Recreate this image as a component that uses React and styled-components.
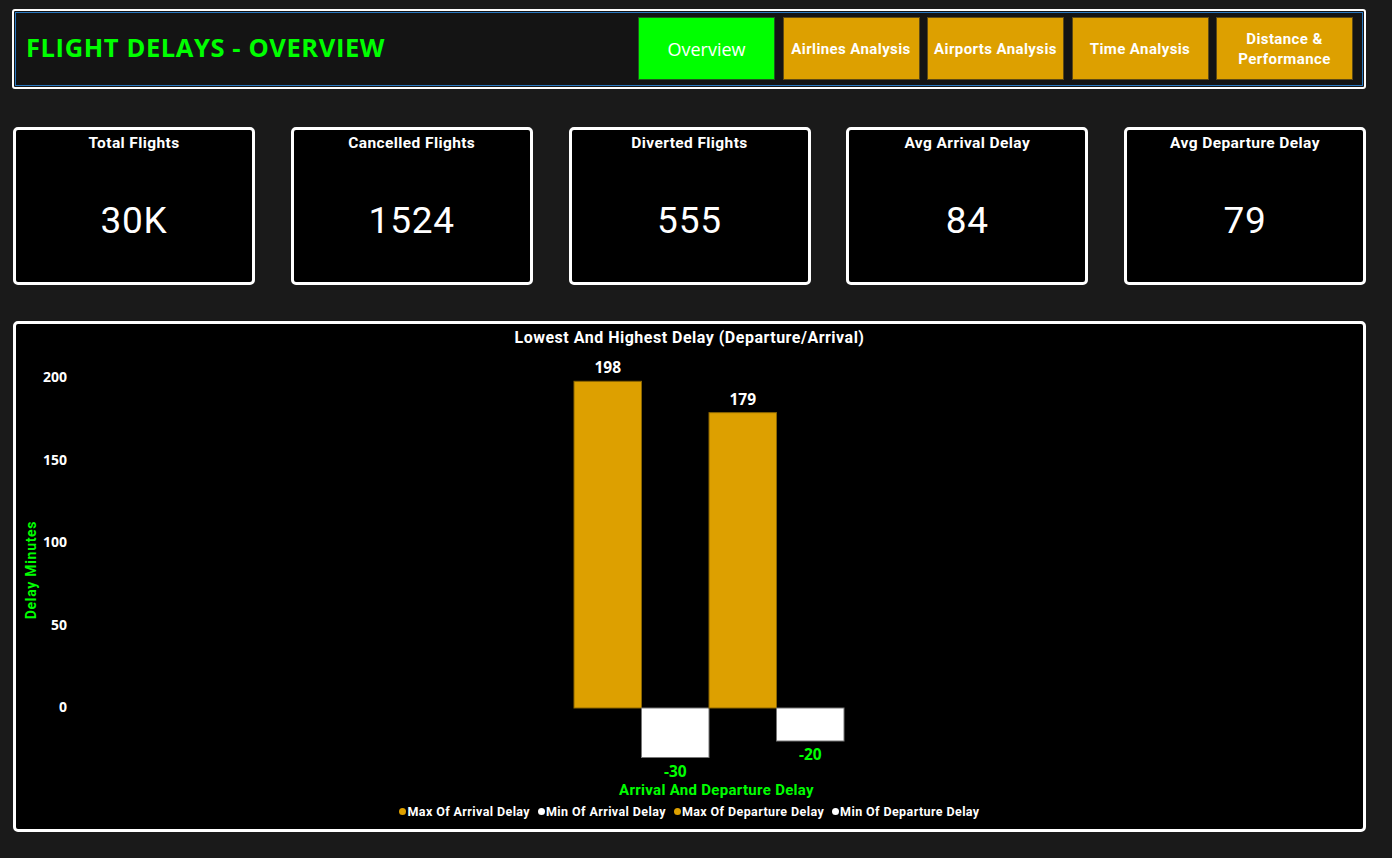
import React from 'react';
import styled, { createGlobalStyle } from 'styled-components';

const din = `Roboto, "Liberation Sans", sans-serif`;
const segoe = `"Open Sans", "Noto Sans", sans-serif`;

const GOLD = '#dda000';
const GREEN = '#00ff00';

const GlobalStyle = createGlobalStyle`
  html, body {
    margin: 0;
    padding: 0;
    background: #1a1a1a;
  }
  * { box-sizing: border-box; }
`;

const Page = styled.div`
  width: 1354px;
  margin-left: 12px;
  padding-top: 9px;
  display: flex;
  flex-direction: column;
`;

const Header = styled.header`
  height: 80px;
  border: 2px solid #fff;
  border-radius: 3px;
  padding: 1px;
  background: #141414;
`;

const HeaderInner = styled.div`
  height: 100%;
  border: 1px solid #2a78c0;
  display: flex;
  align-items: center;
  justify-content: space-between;
  padding: 0 9px 1px 10px;
`;

const Title = styled.h1`
  margin: 0 0 3px;
  font-family: ${segoe};
  font-weight: 700;
  font-size: 25.5px;
  color: ${GREEN};
  letter-spacing: 0.6px;
`;

const Tabs = styled.nav`
  display: flex;
  gap: 7.5px;
`;

const Tab = styled.div`
  width: 137px;
  height: 63px;
  display: flex;
  align-items: center;
  justify-content: center;
  text-align: center;
  color: #fff;
  line-height: 20px;
  background: ${p => (p.$active ? GREEN : GOLD)};
  border: 1px solid ${p => (p.$active ? '#1d5a1d' : '#5e4a14')};
  font-family: ${p => (p.$active ? segoe : din)};
  font-weight: ${p => (p.$active ? 400 : 700)};
  font-size: ${p => (p.$active ? '18px' : '15px')};
  letter-spacing: ${p => (p.$active ? '0' : '0.4px')};
`;

const KpiRow = styled.section`
  margin-top: 38px;
  display: flex;
  justify-content: space-between;
  padding-left: 1px;
`;

const Card = styled.div`
  width: 242px;
  height: 158px;
  background: #000;
  border: 3px solid #fff;
  border-radius: 5px;
  display: flex;
  flex-direction: column;
  align-items: center;
  color: #fff;
`;

const CardTitle = styled.div`
  font-family: ${din};
  font-weight: 700;
  font-size: 15.5px;
  padding-top: 3px;
  line-height: 20px;
  letter-spacing: 0.4px;
`;

const CardValue = styled.div`
  flex: 1;
  display: flex;
  align-items: center;
  padding-top: 5px;
  font-family: ${din};
  font-size: 37px;
  letter-spacing: 0.8px;
`;

const Panel = styled.section`
  margin-top: 36px;
  margin-left: 1px;
  height: 511px;
  background: #000;
  border: 3px solid #fff;
  border-radius: 5px;
  display: flex;
  flex-direction: column;
  color: #fff;
`;

const PanelTitle = styled.div`
  height: 26px;
  display: flex;
  align-items: center;
  justify-content: center;
  font-family: ${din};
  font-weight: 700;
  font-size: 16px;
  letter-spacing: 0.5px;
`;

const Plot = styled.svg`
  display: block;
  font-family: ${segoe};
  font-weight: 700;
`;

const AxisTitle = styled.div`
  padding-left: 54px;
  text-align: center;
  font-family: ${din};
  font-weight: 700;
  font-size: 15px;
  color: ${GREEN};
  line-height: 20px;
  letter-spacing: 0.3px;
`;

const Legend = styled.div`
  display: flex;
  justify-content: center;
  gap: 8px;
  margin-top: 4px;
  font-family: ${din};
  font-weight: 700;
  font-size: 12.5px;
  letter-spacing: 0.4px;
`;

const LegendItem = styled.span`
  display: flex;
  align-items: center;
  gap: 1px;
`;

const Dot = styled.i`
  width: 7px;
  height: 7px;
  border-radius: 50%;
  background: ${p => p.$color};
`;

const kpis = [
  ['Total Flights', '30K'],
  ['Cancelled Flights', '1524'],
  ['Diverted Flights', '555'],
  ['Avg Arrival Delay', '84'],
  ['Avg Departure Delay', '79'],
];

const bars = [
  { v: 198, color: GOLD, stroke: '#8a6500' },
  { v: -30, color: '#fff', stroke: '#777' },
  { v: 179, color: GOLD, stroke: '#8a6500' },
  { v: -20, color: '#fff', stroke: '#777' },
];

const legend = [
  ['Max Of Arrival Delay', GOLD],
  ['Min Of Arrival Delay', '#fff'],
  ['Max Of Departure Delay', GOLD],
  ['Min Of Departure Delay', '#fff'],
];

function Chart() {
  const zero = 358;
  const k = 1.65;
  const bw = 67.5;
  const x0 = 558;
  return (
    <Plot width="1348" height="430" viewBox="0 0 1348 430">
      {[0, 50, 100, 150, 200].map(t => (
        <text key={t} x="51" y={zero - t * k + 4} fill="#fff" fontSize="14" textAnchor="end">
          {t}
        </text>
      ))}
      <text
        transform="translate(20 220) rotate(-90)"
        fill={GREEN}
        fontSize="14"
        textAnchor="middle"
        fontFamily={din}
        letterSpacing="0.7"
      >
        Delay Minutes
      </text>
      {bars.map((b, i) => {
        const x = x0 + i * bw;
        const h = Math.abs(b.v) * k;
        const y = b.v > 0 ? zero - h : zero;
        const ly = b.v > 0 ? y - 8 : y + h + 19;
        return (
          <g key={i}>
            <rect x={x} y={y} width={bw} height={h} fill={b.color} stroke={b.stroke} strokeWidth="1" />
            <text x={x + bw / 2} y={ly} fill={b.v > 0 ? '#fff' : GREEN} fontSize="15.5" textAnchor="middle">
              {b.v}
            </text>
          </g>
        );
      })}
    </Plot>
  );
}

export default function App() {
  return (
    <>
      <GlobalStyle />
      <Page>
        <Header>
          <HeaderInner>
            <Title>FLIGHT DELAYS - OVERVIEW</Title>
            <Tabs>
              <Tab $active>Overview</Tab>
              <Tab>Airlines Analysis</Tab>
              <Tab>Airports Analysis</Tab>
              <Tab>Time Analysis</Tab>
              <Tab>Distance &amp;<br />Performance</Tab>
            </Tabs>
          </HeaderInner>
        </Header>
        <KpiRow>
          {kpis.map(([t, v]) => (
            <Card key={t}>
              <CardTitle>{t}</CardTitle>
              <CardValue>{v}</CardValue>
            </Card>
          ))}
        </KpiRow>
        <Panel>
          <PanelTitle>Lowest And Highest Delay (Departure/Arrival)</PanelTitle>
          <Chart />
          <AxisTitle>Arrival And Departure Delay</AxisTitle>
          <Legend>
            {legend.map(([t, c]) => (
              <LegendItem key={t}>
                <Dot $color={c} />
                {t}
              </LegendItem>
            ))}
          </Legend>
        </Panel>
      </Page>
    </>
  );
}
